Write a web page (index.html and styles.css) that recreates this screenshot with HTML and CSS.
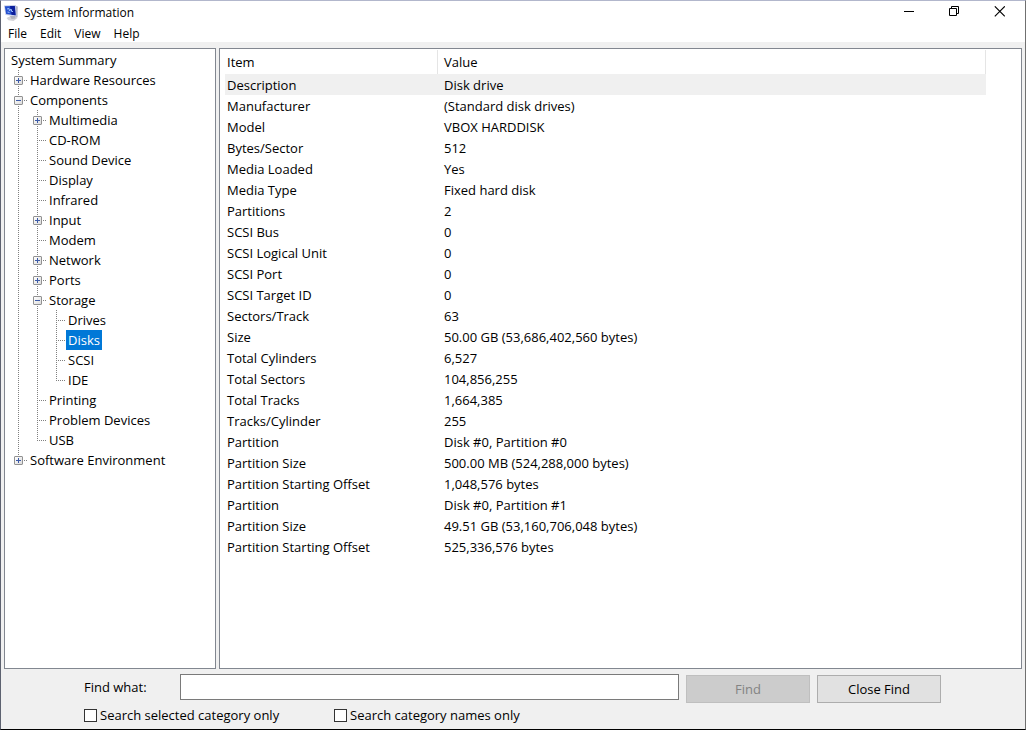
FILE: index.html
```html
<!DOCTYPE html>
<html lang="en">
<head>
<meta charset="utf-8">
<title>System Information</title>
<link rel="stylesheet" href="styles.css">
</head>
<body>
<div class="window">
  <header class="titlebar">
    <svg class="app-icon" width="16" height="16" viewBox="0 0 16 16" aria-hidden="true">
      <path d="M2.500 13l4-2h6l1 2-4 3-5-.8z" fill="#d3d3d8"/>
      <path d="M6 11l5-.5.6 3-4 .6z" fill="#b0b2bc"/>
      <path d="M10.500 .4l3.300 1-.3 10.800-2.500-.8z" fill="#b4b6c6"/>
      <path d="M0 .6L11.600 0l1 11.300L1.500 10z" fill="#c3cae6"/>
      <path d="M.8 1.300L10.800 1l.8 9.200L2.200 9z" fill="#2450cf"/>
      <path d="M6 1.100l4.800-.1.800 9.200-4-.5z" fill="#0d1f9c"/>
      <path d="M3 4l2-.5.500 2.500 1.500-2 1 3 1-1M3.500 7l2 .5" fill="none" stroke="#9cc0ff"/>
    </svg>
    <h1 class="title">System Information</h1>
    <div class="caption-buttons">
      <button class="caption-button" type="button" aria-label="Minimize"><svg width="11" height="11" viewBox="0 0 11 11"><path d="M0 5.500h10" stroke="#000"/></svg></button>
      <button class="caption-button" type="button" aria-label="Restore"><svg width="11" height="11" viewBox="0 0 11 11"><path d="M.5 2.500h7v7h-7zM2.500 2.500v-2h7v7h-2" fill="none" stroke="#000"/></svg></button>
      <button class="caption-button" type="button" aria-label="Close"><svg width="11" height="11" viewBox="0 0 11 11"><path d="M.8 .3l10 10M10.800 .3l-10 10" stroke="#000" stroke-width="1.100"/></svg></button>
    </div>
  </header>
  <nav class="menubar">
    <button class="menu" type="button">File</button>
    <button class="menu" type="button">Edit</button>
    <button class="menu" type="button">View</button>
    <button class="menu" type="button">Help</button>
  </nav>
  <main class="panes">
    <section class="pane tree-pane" aria-label="Categories">
      <div class="row"><span class="label">System Summary</span></div>
      <ul class="tree">
        <li><div class="row"><button class="expander plus" type="button" aria-label="Expand"></button><span class="label">Hardware Resources</span></div></li>
        <li><div class="row"><button class="expander" type="button" aria-label="Collapse"></button><span class="label">Components</span></div>
          <ul>
            <li><div class="row"><button class="expander plus" type="button" aria-label="Expand"></button><span class="label">Multimedia</span></div></li>
            <li><div class="row leaf"><span class="label">CD-ROM</span></div></li>
            <li><div class="row leaf"><span class="label">Sound Device</span></div></li>
            <li><div class="row leaf"><span class="label">Display</span></div></li>
            <li><div class="row leaf"><span class="label">Infrared</span></div></li>
            <li><div class="row"><button class="expander plus" type="button" aria-label="Expand"></button><span class="label">Input</span></div></li>
            <li><div class="row leaf"><span class="label">Modem</span></div></li>
            <li><div class="row"><button class="expander plus" type="button" aria-label="Expand"></button><span class="label">Network</span></div></li>
            <li><div class="row"><button class="expander plus" type="button" aria-label="Expand"></button><span class="label">Ports</span></div></li>
            <li><div class="row"><button class="expander" type="button" aria-label="Collapse"></button><span class="label">Storage</span></div>
              <ul>
                <li><div class="row leaf"><span class="label">Drives</span></div></li>
                <li><div class="row leaf"><span class="label selected">Disks</span></div></li>
                <li><div class="row leaf"><span class="label">SCSI</span></div></li>
                <li><div class="row leaf"><span class="label">IDE</span></div></li>
              </ul>
            </li>
            <li><div class="row leaf"><span class="label">Printing</span></div></li>
            <li><div class="row leaf"><span class="label">Problem Devices</span></div></li>
            <li><div class="row leaf"><span class="label">USB</span></div></li>
          </ul>
        </li>
        <li><div class="row"><button class="expander plus" type="button" aria-label="Expand"></button><span class="label">Software Environment</span></div></li>
      </ul>
    </section>
    <section class="pane detail-pane" aria-label="Details">
      <table class="details">
        <thead><tr><th class="item">Item</th><th>Value</th></tr></thead>
        <tbody>
          <tr class="current"><td>Description</td><td>Disk drive</td></tr>
          <tr><td>Manufacturer</td><td>(Standard disk drives)</td></tr>
          <tr><td>Model</td><td>VBOX HARDDISK</td></tr>
          <tr><td>Bytes/Sector</td><td>512</td></tr>
          <tr><td>Media Loaded</td><td>Yes</td></tr>
          <tr><td>Media Type</td><td>Fixed hard disk</td></tr>
          <tr><td>Partitions</td><td>2</td></tr>
          <tr><td>SCSI Bus</td><td>0</td></tr>
          <tr><td>SCSI Logical Unit</td><td>0</td></tr>
          <tr><td>SCSI Port</td><td>0</td></tr>
          <tr><td>SCSI Target ID</td><td>0</td></tr>
          <tr><td>Sectors/Track</td><td>63</td></tr>
          <tr><td>Size</td><td>50.00 GB (53,686,402,560 bytes)</td></tr>
          <tr><td>Total Cylinders</td><td>6,527</td></tr>
          <tr><td>Total Sectors</td><td>104,856,255</td></tr>
          <tr><td>Total Tracks</td><td>1,664,385</td></tr>
          <tr><td>Tracks/Cylinder</td><td>255</td></tr>
          <tr><td>Partition</td><td>Disk #0, Partition #0</td></tr>
          <tr><td>Partition Size</td><td>500.00 MB (524,288,000 bytes)</td></tr>
          <tr><td>Partition Starting Offset</td><td>1,048,576 bytes</td></tr>
          <tr><td>Partition</td><td>Disk #0, Partition #1</td></tr>
          <tr><td>Partition Size</td><td>49.51 GB (53,160,706,048 bytes)</td></tr>
          <tr><td>Partition Starting Offset</td><td>525,336,576 bytes</td></tr>
        </tbody>
      </table>
    </section>
  </main>
  <form class="find">
    <div class="find-row">
      <label class="find-label" for="find-what">Find what:</label>
      <input class="find-input" id="find-what" type="text">
      <button class="push" type="button" disabled>Find</button>
      <button class="push" type="button">Close Find</button>
    </div>
    <div class="option-row">
      <label class="option"><input class="check" type="checkbox">Search selected category only</label>
      <label class="option"><input class="check" type="checkbox">Search category names only</label>
    </div>
  </form>
</div>
</body>
</html>
```
FILE: styles.css
```css
* { box-sizing: border-box; }

body {
  margin: 0;
  font: 13px/20px "Open Sans", "Noto Sans", sans-serif;
  color: #000;
}

button, input { font: inherit; color: inherit; }

.window {
  display: flex;
  flex-direction: column;
  height: 100vh;
  background: #f0f0f0;
  border: 1px solid #5d6270;
  border-top-color: #b2b7cc;
  border-bottom-color: #000;
  border-right-color: #707070;
}

.titlebar {
  display: flex;
  align-items: center;
  height: 24px;
  padding: 0 3px;
  background: #fff;
}

.app-icon { margin-right: 4px; }

.title {
  flex: 1;
  margin: 0;
  font-size: 12px;
  font-weight: 400;
}

.caption-buttons { display: flex; align-self: flex-start; }

.caption-button {
  display: flex;
  align-items: center;
  justify-content: center;
  width: 45px;
  height: 21px;
  padding: 0;
  border: 0;
  background: none;
}

.menubar {
  display: flex;
  gap: 1px;
  height: 17px;
  padding-left: 1px;
  background: #fff;
}

.menu {
  padding: 0 6px;
  border: 0;
  background: none;
  font-size: 12px;
  line-height: 17px;
}

.panes {
  display: flex;
  flex: 1;
  gap: 3px;
  min-height: 0;
  padding: 6px 3px 0;
}

.pane {
  background: #fff;
  border: 1px solid #828790;
  overflow: auto;
}

.tree-pane { flex: 0 0 212px; padding: 1px 4px; }

.detail-pane { flex: 1; padding: 1px 35px 0 5px; }

.tree, .tree ul { margin: 0; padding: 0; list-style: none; }

.tree { padding-left: 5px; }

.tree ul { padding-left: 19px; }

.tree li { position: relative; }

.tree li::before {
  content: "";
  position: absolute;
  top: 0;
  bottom: 0;
  left: 4px;
  width: 1px;
  background: repeating-linear-gradient(#808080 0 1px, transparent 1px 2px);
}

.tree li:last-child::before { bottom: auto; height: 11px; }

.row { display: flex; align-items: center; height: 20px; }

.label { padding: 0 2px; white-space: nowrap; }

.label.selected { background: #0078d7; color: #fff; }

.tree .row::before {
  content: "";
  order: 1;
  width: 5px;
  height: 1px;
  background: repeating-linear-gradient(90deg, transparent 0 1px, #808080 1px 2px);
}

.tree .row.leaf::before {
  width: 10px;
  margin-left: 4px;
  background: repeating-linear-gradient(90deg, #808080 0 1px, transparent 1px 2px);
}

.tree .label { order: 2; }

.expander {
  position: relative;
  width: 9px;
  height: 9px;
  padding: 0;
  border: 1px solid #919191;
  border-radius: 1px;
  background:
    linear-gradient(#3c5aa8, #3c5aa8) center / 5px 1px no-repeat,
    linear-gradient(135deg, #fff, #dcdcdc);
}

.expander.plus {
  background:
    linear-gradient(#3c5aa8, #3c5aa8) center / 5px 1px no-repeat,
    linear-gradient(#3c5aa8, #3c5aa8) center / 1px 5px no-repeat,
    linear-gradient(135deg, #fff, #dcdcdc);
}

.details {
  width: 100%;
  border-collapse: separate;
  border-spacing: 0;
  table-layout: fixed;
}

.details th {
  height: 24px;
  padding: 0 6px;
  border-right: 1px solid #e5e5e5;
  font-weight: 400;
  text-align: left;
}

.details .item { width: 213px; }

.details td { height: 21px; padding: 0 6px; white-space: nowrap; }

.details th:first-child, .details td:first-child { padding-left: 2px; }

.current { background: #f0f0f0; }

.find {
  display: flex;
  flex-direction: column;
  gap: 3px;
  padding: 5px 84px 5px 83px;
}

.find-row { display: flex; align-items: flex-start; }

.find-label { width: 96px; line-height: 26px; }

.find-input {
  flex: 1;
  min-width: 0;
  height: 26px;
  padding: 0 4px;
  border: 1px solid #7a7a7a;
  background: #fff;
}

.push {
  width: 124px;
  height: 28px;
  margin: 1px 0 0 7px;
  padding: 0;
  border: 1px solid #adadad;
  background: #e1e1e1;
}

.push:disabled { border-color: #bfbfbf; background: #ccc; color: #838383; }

.option-row { display: flex; }

.option {
  display: flex;
  align-items: center;
  gap: 3px;
  width: 250px;
  height: 18px;
  white-space: nowrap;
}

.check {
  appearance: none;
  width: 13px;
  height: 13px;
  margin: 0;
  border: 1px solid #333;
  background: #fff;
}

.check:checked { background: #0078d7; }
```
